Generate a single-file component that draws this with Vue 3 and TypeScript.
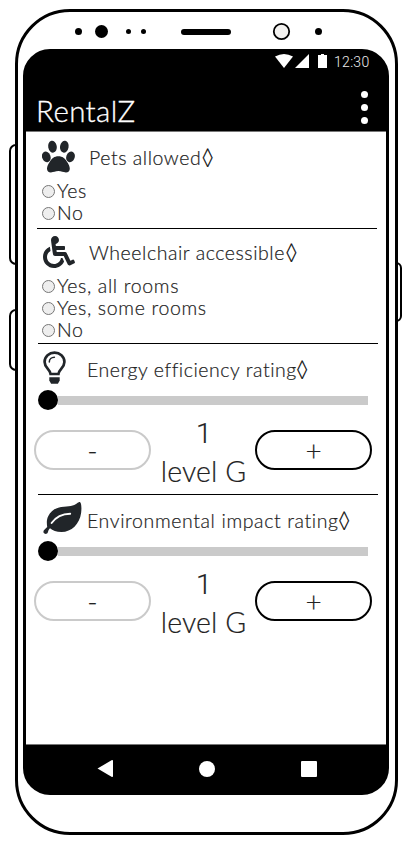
<script setup lang="ts">
interface Choice {
  id: string
  title: string
  icon: 'paw' | 'wheelchair'
  options: string[]
}
interface Rating {
  id: string
  title: string
  icon: 'bulb' | 'leaf'
  value: number
  level: string
}

const choices: Choice[] = [
  { id: 'pets', title: 'Pets allowed', icon: 'paw', options: ['Yes', 'No'] },
  { id: 'access', title: 'Wheelchair accessible', icon: 'wheelchair', options: ['Yes, all rooms', 'Yes, some rooms', 'No'] },
]
const ratings: Rating[] = [
  { id: 'energy', title: 'Energy efficiency rating', icon: 'bulb', value: 1, level: 'level G' },
  { id: 'impact', title: 'Environmental impact rating', icon: 'leaf', value: 1, level: 'level G' },
]
</script>

<template>
  <div class="stage">
    <i class="side side-a"></i>
    <i class="side side-b"></i>
    <i class="side side-c"></i>
    <div class="phone">
      <svg class="sensors" width="377" height="37" viewBox="18 12 377 37">
        <circle cx="78.500" cy="31.500" r="3.500" />
        <circle cx="101.500" cy="31.500" r="6.500" />
        <circle cx="128.500" cy="31.500" r="2.500" />
        <circle cx="143.500" cy="31.500" r="2.500" />
        <rect x="181" y="29" width="50" height="6" rx="3" />
        <circle cx="281.500" cy="31.500" r="7.700" fill="#f3f2f0" stroke="#000" stroke-width="1.800" />
        <circle cx="318.500" cy="31.500" r="3.500" />
      </svg>
      <div class="screen">
        <header class="top">
          <div class="status">
            <svg width="53" height="14" viewBox="0 0 53 14" fill="#fff">
              <path d="M0 2.600Q9-2.600 18 2.600L9 14Z" />
              <path d="M20 14L34 0V14Z" />
              <path d="M43 1h3V0h3v1h3v13h-9Z" />
            </svg>
            <span class="clock">12:30</span>
          </div>
          <div class="bar">
            <h1>RentalZ</h1>
            <div class="menu"><i></i><i></i><i></i></div>
          </div>
        </header>

        <main>
          <section v-for="c in choices" :key="c.id" :class="['choice', c.id]">
            <div class="head">
              <svg v-if="c.icon === 'paw'" class="icon" width="33" height="33" viewBox="0 0 33 33">
                <ellipse cx="10.500" cy="6.700" rx="4.300" ry="6" transform="rotate(-10 10.500 6.700)" />
                <ellipse cx="22.300" cy="6.700" rx="4.300" ry="6" transform="rotate(10 22.300 6.700)" />
                <ellipse cx="4.300" cy="16.900" rx="4.200" ry="5.500" transform="rotate(-20 4.300 16.900)" />
                <ellipse cx="28.500" cy="16.900" rx="4.200" ry="5.500" transform="rotate(20 28.500 16.900)" />
                <path d="M16.400 16.300C20.500 16.300 23 18.500 25 21.800C26.600 24.400 27.800 26.400 27.800 28.800C27.800 31.200 26.300 32.400 23.900 32.400C21 32.400 19.600 31.100 16.400 31.100S11.800 32.400 8.900 32.400C6.500 32.400 5 31.200 5 28.800C5 26.400 6.200 24.400 7.800 21.800C9.800 18.500 12.300 16.300 16.400 16.300Z" />
              </svg>
              <svg v-else class="icon" width="32" height="32" viewBox="0 0 512 512">
                <path d="M496.101 385.669l14.227 28.663c3.929 7.915.697 17.516-7.218 21.445l-65.465 32.886c-16.049 7.967-35.556 1.194-43.189-15.055L331.679 320H192c-15.925 0-29.426-11.710-31.679-27.475C126.433 55.308 128.380 70.044 128 64c0-36.358 30.318-65.635 67.052-63.929 33.271 1.545 60.048 28.905 60.925 62.201.868 32.933-23.152 60.423-54.608 65.039l4.670 32.690H336c8.837 0 16 7.163 16 16v32c0 8.837-7.163 16-16 16H215.182l4.572 32H352a32 32 0 0 1 28.962 18.392L438.477 396.800l36.178-18.349c7.915-3.929 17.517-.697 21.446 7.218zM311.358 352h-24.506c-7.788 54.204-54.528 96-110.852 96-61.757 0-112-50.243-112-112 0-41.505 22.694-77.809 56.324-97.156-3.712-25.965-6.844-47.860-9.488-66.333C45.956 198.464 0 261.963 0 336c0 97.047 78.953 176 176 176 71.870 0 133.806-43.308 161.110-105.192L311.358 352z" />
              </svg>
              <h2>{{ c.title }}</h2><span class="loz">◊</span>
            </div>
            <ul>
              <li v-for="o in c.options" :key="o"><i class="radio"></i><span>{{ o }}</span></li>
            </ul>
          </section>

          <section v-for="r in ratings" :key="r.id" :class="['rating', r.id]">
            <div class="head">
              <svg v-if="r.icon === 'bulb'" class="icon" width="24" height="34" viewBox="0 0 24 34">
                <path class="line" d="M7.600 23C7.300 18.200 1.600 17 1.600 11C1.600 5.500 6.200 1.700 11.500 1.700S21.400 5.500 21.400 11C21.400 17 15.700 18.200 15.400 23Z" />
                <path class="thin" d="M6.300 11C6.300 8.200 8.500 6.200 11.400 6.200" />
                <path d="M6.300 26.200h10.400v3.200L14.900 32.700H8.100L6.300 29.400Z" />
              </svg>
              <svg v-else class="icon" width="39" height="34" viewBox="0 0 39 34">
                <path d="M36.300 1C38.200.500 38.900 6 38.100 12C36.700 23 28.500 31 18.500 31C13.500 31 9.500 29.500 7 27.300C5.600 28.600 5.300 30 4.700 31.800C4 33.500 1.200 33.200.500 31.500C-.100 29.300 2.300 28.300 4.200 26C3.800 23 3.300 19 5.200 15.300C8 9 14 6 21 5.700C28 5.500 32.500 4.200 34.700 1.800Z" />
                <path class="vein" d="M8.600 22C13 15.800 19 12.800 27.200 12.700" />
              </svg>
              <h2>{{ r.title }}</h2><span class="loz">◊</span>
            </div>
            <div class="slider"><i class="knob"></i><i class="track"></i></div>
            <div class="stepper">
              <button class="minus">-</button>
              <p><span class="value">{{ r.value }}</span><span>{{ r.level }}</span></p>
              <button class="plus">+</button>
            </div>
          </section>
        </main>

        <nav>
          <svg width="360" height="47" viewBox="26 745 360 47" fill="#fff">
            <path d="M97.500 768.500L111.500 760.300Q113 759.600 113 761V776Q113 777.400 111.500 776.700Z" />
            <circle cx="207" cy="769" r="8" />
            <rect x="301" y="761" width="16" height="16" rx="1" />
          </svg>
        </nav>
      </div>
    </div>
  </div>
</template>

<style>
body {
  background: #fff;
}
</style>

<style scoped>
* {
  box-sizing: border-box;
  margin: 0;
  padding: 0;
}
.stage {
  position: relative;
  width: 413px;
  height: 845px;
  padding: 9px 15px 10px;
  overflow: hidden;
  font-family: Lato, sans-serif;
  color: #222;
}
.phone {
  position: relative;
  width: 383px;
  height: 826px;
  border: 3px solid #000;
  border-radius: 55px;
  background: #fff;
}
.sensors {
  display: block;
}
.side {
  position: absolute;
  border: 2px solid #000;
}
.side-a {
  left: 9px;
  top: 144px;
  width: 10px;
  height: 121px;
  border-radius: 7px 0 0 7px;
}
.side-b {
  left: 9px;
  top: 309px;
  width: 10px;
  height: 62px;
  border-radius: 7px 0 0 7px;
}
.side-c {
  left: 394px;
  top: 262px;
  width: 8px;
  height: 60px;
  border-radius: 0 6px 6px 0;
}
.screen {
  display: flex;
  flex-direction: column;
  width: 366px;
  height: 746px;
  margin-left: 5px;
  border: 3px solid #000;
  border-radius: 27px;
  overflow: hidden;
  background: #000;
}
.top {
  height: 80px;
  border-bottom: 1px solid #777;
}
.status {
  display: flex;
  align-items: center;
  height: 18px;
  padding-left: 249px;
}
.clock {
  margin-left: 6px;
  padding-top: 2px;
  font: 300 14px/18px Roboto, sans-serif;
  letter-spacing: 0.300px;
  color: #eee;
}
.bar {
  display: flex;
  justify-content: space-between;
  height: 61px;
  padding: 21px 18px 0 10px;
}
h1 {
  font-size: 29.500px;
  line-height: 39px;
  font-weight: 300;
  letter-spacing: 0.400px;
  color: #fff;
  -webkit-text-stroke: 0.300px #fff;
}
.menu {
  display: flex;
  flex-direction: column;
  gap: 6px;
}
.menu i {
  width: 7px;
  height: 7px;
  border-radius: 50%;
  background: #fff;
}
main {
  flex: 1;
  padding-left: 8px;
  background: #fff;
  -webkit-text-stroke: 0.200px #222;
}
section {
  width: 344px;
}
.choice::after,
.energy::after {
  content: '';
  display: block;
  height: 1px;
  margin-left: 4px;
  width: 340px;
  background: #000;
}
.pets::after {
  margin-left: 3px;
}
.head {
  display: flex;
  align-items: center;
}
.icon {
  flex: none;
  fill: #212529;
}
.line {
  fill: none;
  stroke: #212529;
  stroke-width: 2.700;
}
.thin {
  fill: none;
  stroke: #212529;
  stroke-width: 1.500;
  stroke-linecap: round;
}
.vein {
  fill: none;
  stroke: #fff;
  stroke-width: 1.900;
  stroke-linecap: round;
}
h2 {
  padding-top: 2px;
  font-size: 19.500px;
  font-weight: 300;
  line-height: 26px;
  letter-spacing: 0.550px;
  white-space: nowrap;
}
.loz {
  font: 300 22px/26px Lato, sans-serif;
  color: #000;
}
.pets .head {
  height: 47px;
  padding: 2px 0 0 8px;
}
.pets h2 {
  margin-left: 14px;
}
.access .head {
  height: 45px;
  padding: 1px 0 0 9px;
}
.access h2 {
  margin-left: 14px;
}
ul {
  list-style: none;
  padding-left: 8px;
}
li {
  display: flex;
  align-items: center;
  height: 22px;
  font-size: 19.500px;
  font-weight: 300;
  letter-spacing: 0.650px;
}
.pets ul {
  height: 49px;
}
.access ul {
  height: 69px;
}
.radio {
  width: 13px;
  height: 13px;
  margin: 2px 2px 0 0;
  border: 1px solid #777;
  border-radius: 50%;
  background: #eee;
}
.energy .head,
.impact .head {
  height: 46px;
  padding-left: 9px;
}
.energy .icon {
  margin-top: 1px;
}
.energy h2 {
  margin-left: 20px;
}
.impact h2 {
  margin-left: 5px;
  letter-spacing: 0.620px;
}
.rating h2 {
  padding-top: 6px;
}
.rating .loz {
  margin-left: -1px;
  padding-top: 4px;
}
.slider {
  display: flex;
  align-items: center;
  height: 20px;
  padding-left: 4px;
}
.knob {
  width: 20px;
  height: 20px;
  border-radius: 50%;
  background: #000;
}
.track {
  width: 310px;
  height: 9px;
  background: #cacaca;
}
.stepper {
  display: flex;
  height: 84px;
  width: 338px;
}
button {
  width: 117px;
  height: 40px;
  margin-top: 20px;
  border: 2px solid #000;
  border-radius: 20px;
  background: #fff;
  font: 300 28px/34px Lato, sans-serif;
  color: #222;
}
.minus {
  border-color: #cacaca;
}
p {
  display: flex;
  flex-direction: column;
  align-items: center;
  width: 104px;
  padding: 4px 0 0 1px;
  font-size: 28.500px;
  line-height: 38px;
  font-weight: 300;
  letter-spacing: 0.100px;
  white-space: nowrap;
}
.value {
  height: 38px;
  padding: 1px 0 0 1px;
  font-family: Roboto, sans-serif;
}
nav {
  height: 48px;
  border-top: 1px solid #777;
}
nav svg {
  display: block;
}
</style>
